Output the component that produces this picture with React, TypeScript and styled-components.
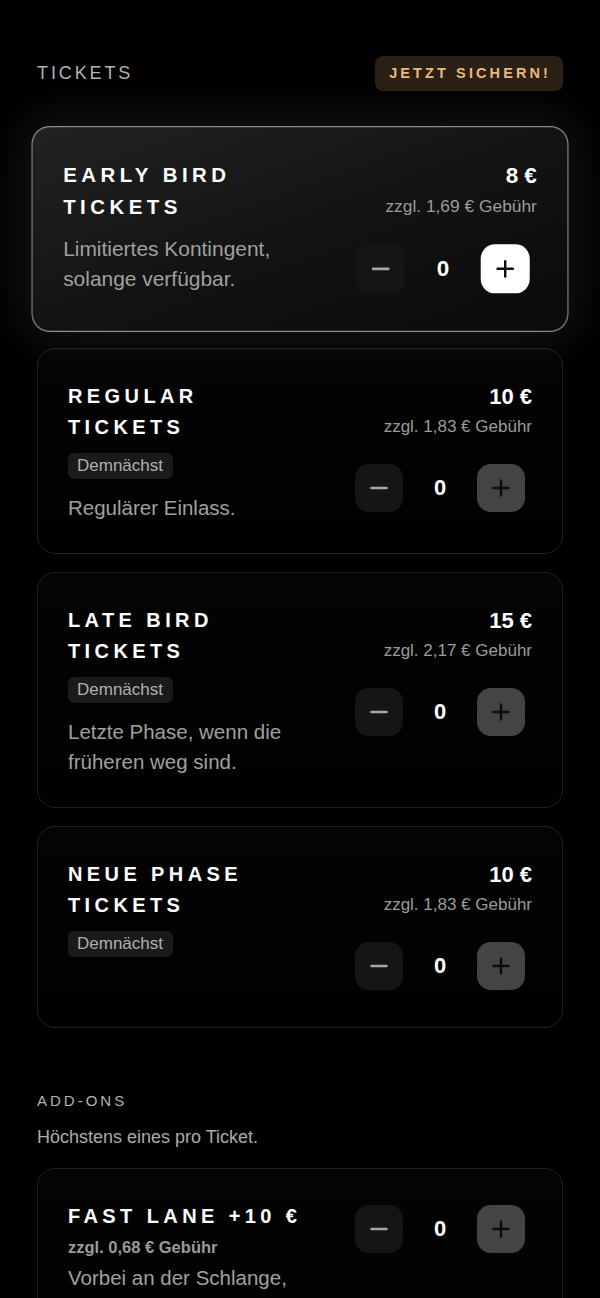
import React from "react";
import styled, { createGlobalStyle, css } from "styled-components";

const GlobalStyle = createGlobalStyle`
  html, body {
    margin: 0;
    padding: 0;
    background: #000;
  }
  body {
    font-family: "Liberation Sans", Arial, Helvetica, sans-serif;
    color: #fff;
    -webkit-font-smoothing: antialiased;
  }
`;

const Page = styled.main`
  width: 600px;
  min-height: 1298px;
  box-sizing: border-box;
  padding: 56px 37px 40px;
  background: #000;
  overflow: hidden;
`;

const SectionHead = styled.header`
  display: flex;
  align-items: center;
  justify-content: space-between;
`;

const SectionLabel = styled.h2<{ $small?: boolean }>`
  margin: 0;
  font-weight: 400;
  color: #b3b3b3;
  font-size: ${(p) => (p.$small ? "15px" : "18px")};
  letter-spacing: ${(p) => (p.$small ? "0.2em" : "0.16em")};
  line-height: ${(p) => (p.$small ? "20px" : "35px")};
`;

const CallToAction = styled.span`
  display: inline-block;
  height: 35px;
  line-height: 35px;
  padding: 0 12px 0 14px;
  border-radius: 8px;
  background: #2a2015;
  color: #e9b97c;
  font-size: 14.5px;
  font-weight: 700;
  letter-spacing: 3.1px;
`;

const CardList = styled.div`
  display: flex;
  flex-direction: column;
  gap: 18px;
  margin-top: 37px;
`;

const AddonSection = styled.section`
  margin-top: 63px;
`;

const Hint = styled.p`
  margin: 14px 0 19px;
  font-size: 18px;
  line-height: 24px;
  color: #ababab;
`;

const Card = styled.article<{ $featured?: boolean }>`
  display: flex;
  gap: 44px;
  padding: 32px 30px 30px;
  border-radius: 18px;
  border: 1px solid #202020;
  background: linear-gradient(180deg, #040404 0%, #010101 100%);

  ${(p) =>
    p.$featured &&
    css`
      position: relative;
      z-index: 1;
      transform: scale(1.021);
      border-color: rgba(255, 255, 255, 0.5);
      background: linear-gradient(160deg, #222 0%, #121212 55%, #0b0b0b 100%);
      box-shadow: 0 0 45px 6px rgba(255, 255, 255, 0.09),
        inset 0 0 0 0.5px rgba(255, 255, 255, 0.25);
    `}
`;

const Info = styled.div`
  flex: 1;
  min-width: 0;
  display: flex;
  flex-direction: column;
  align-items: flex-start;
`;

const Title = styled.h3`
  margin: 0;
  font-size: 20px;
  font-weight: 700;
  line-height: 31px;
  letter-spacing: 0.22em;
  text-transform: uppercase;
  color: #fff;
`;

const Badge = styled.span`
  margin: 10px 0 4px;
  padding: 3px 10px 3px 9px;
  border-radius: 6px;
  background: #1a1a1a;
  color: #b0b0b0;
  font-size: 17px;
  line-height: 20px;
`;

const AddonFee = styled.span`
  margin-top: 3px;
  font-size: 16.5px;
  font-weight: 700;
  line-height: 24px;
  color: #9b9b9b;
`;

const Desc = styled.p<{ $space: number }>`
  margin: ${(p) => p.$space}px 0 0;
  font-size: 20.5px;
  line-height: 30px;
  color: #a0a0a0;
`;

const Pricing = styled.div`
  flex: none;
  display: flex;
  flex-direction: column;
  align-items: flex-end;
`;

const Price = styled.span`
  font-size: 22px;
  font-weight: 700;
  line-height: 32px;
  color: #fff;
`;

const Fee = styled.span`
  font-size: 17px;
  line-height: 27px;
  color: #9b9b9b;
`;

const Stepper = styled.div<{ $addon?: boolean }>`
  display: flex;
  align-items: center;
  margin: ${(p) => (p.$addon ? "4px 7px 0 0" : "24px 7px 7px 0")};
`;

const StepButton = styled.button<{ $tone: "minus" | "light" | "muted" }>`
  width: 48px;
  height: 48px;
  padding: 0;
  border: none;
  border-radius: 14px;
  display: flex;
  align-items: center;
  justify-content: center;
  cursor: pointer;
  background: ${(p) =>
    p.$tone === "light" ? "#fff" : p.$tone === "muted" ? "#444" : "#151515"};
  color: ${(p) => (p.$tone === "minus" ? "#a6a6a6" : "#0c0c0c")};
`;

const Count = styled.span`
  width: 74px;
  text-align: center;
  font-size: 22px;
  font-weight: 700;
  color: #fff;
`;

const MinusIcon = () => (
  <svg width="18" height="18" viewBox="0 0 18 18" fill="none">
    <path d="M1.5 9h15" stroke="currentColor" strokeWidth="2.6" strokeLinecap="round" />
  </svg>
);

const PlusIcon = () => (
  <svg width="18" height="18" viewBox="0 0 18 18" fill="none">
    <path
      d="M1.5 9h15M9 1.5v15"
      stroke="currentColor"
      strokeWidth="2.4"
      strokeLinecap="round"
    />
  </svg>
);

const Counter = ({ active, addon }: { active?: boolean; addon?: boolean }) => (
  <Stepper $addon={addon}>
    <StepButton $tone="minus" aria-label="weniger">
      <MinusIcon />
    </StepButton>
    <Count>0</Count>
    <StepButton $tone={active ? "light" : "muted"} aria-label="mehr">
      <PlusIcon />
    </StepButton>
  </Stepper>
);

type Ticket = {
  name: string;
  price: string;
  fee: string;
  soon?: boolean;
  desc?: string;
  featured?: boolean;
};

const tickets: Ticket[] = [
  {
    name: "Early Bird Tickets",
    price: "8 €",
    fee: "zzgl. 1,69 € Gebühr",
    desc: "Limitiertes Kontingent, solange verfügbar.",
    featured: true,
  },
  {
    name: "Regular Tickets",
    price: "10 €",
    fee: "zzgl. 1,83 € Gebühr",
    soon: true,
    desc: "Regulärer Einlass.",
  },
  {
    name: "Late Bird Tickets",
    price: "15 €",
    fee: "zzgl. 2,17 € Gebühr",
    soon: true,
    desc: "Letzte Phase, wenn die früheren weg sind.",
  },
  {
    name: "Neue Phase Tickets",
    price: "10 €",
    fee: "zzgl. 1,83 € Gebühr",
    soon: true,
  },
];

const App = () => (
  <>
    <GlobalStyle />
    <Page>
      <SectionHead>
        <SectionLabel>TICKETS</SectionLabel>
        <CallToAction>JETZT SICHERN!</CallToAction>
      </SectionHead>

      <CardList>
        {tickets.map((t) => (
          <Card key={t.name} $featured={t.featured}>
            <Info>
              <Title>{t.name}</Title>
              {t.soon && <Badge>Demnächst</Badge>}
              {t.desc && <Desc $space={10}>{t.desc}</Desc>}
            </Info>
            <Pricing>
              <Price>{t.price}</Price>
              <Fee>{t.fee}</Fee>
              <Counter active={t.featured} />
            </Pricing>
          </Card>
        ))}
      </CardList>

      <AddonSection>
        <SectionLabel $small>ADD-ONS</SectionLabel>
        <Hint>Höchstens eines pro Ticket.</Hint>
        <Card>
          <Info>
            <Title>Fast Lane +10 €</Title>
            <AddonFee>zzgl. 0,68 € Gebühr</AddonFee>
            <Desc $space={4}>Vorbei an der Schlange, direkt zum Einlass.</Desc>
          </Info>
          <Pricing>
            <Counter addon />
          </Pricing>
        </Card>
      </AddonSection>
    </Page>
  </>
);

export default App;
